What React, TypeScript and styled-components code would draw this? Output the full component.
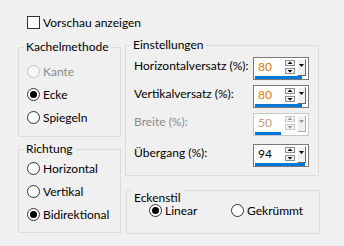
import React from 'react';
import styled, { createGlobalStyle } from 'styled-components';

const Global = createGlobalStyle`
  html, body { margin: 0; padding: 0; background: #f0f0f0; }
  body { font-family: Lato, "Noto Sans", sans-serif; font-size: 12px; color: #000; }
  #root { width: 344px; height: 246px; }
`;

const Page = styled.div`
  width: 344px;
  height: 246px;
  box-sizing: border-box;
  padding: 16px 0 0 18px;
  display: flex;
  flex-direction: column;
`;

const CheckRow = styled.label`
  display: flex;
  align-items: center;
  gap: 3px;
  margin-left: 9px;
  height: 13px;
  line-height: 13px;
`;

const CheckBox = styled.span`
  width: 13px;
  height: 13px;
  box-sizing: border-box;
  border: 1px solid #333;
  background: #fff;
`;

const Columns = styled.div`
  display: flex;
  gap: 4px;
  margin-top: 8px;
  align-items: flex-start;
`;

const LeftCol = styled.div`
  width: 103px;
  padding-top: 2px;
  display: flex;
  flex-direction: column;
  gap: 4px;
`;

const RightCol = styled.div`
  width: 195px;
  display: flex;
  flex-direction: column;
`;

const Group = styled.fieldset<{ $pt: number; $pb: number; $pr?: number; $ml?: number; $mt?: number; $w: number }>`
  margin: ${(p) => p.$mt ?? 0}px 0 0 ${(p) => p.$ml ?? 0}px;
  width: ${(p) => p.$w}px;
  box-sizing: border-box;
  min-width: 0;
  border: 1px solid #dcdcdc;
  padding: ${(p) => p.$pt}px ${(p) => p.$pr ?? 8}px ${(p) => p.$pb}px 8px;
`;

const Legend = styled.legend<{ $drop?: number }>`
  padding: ${(p) => p.$drop ?? 0}px 2px 0;
  margin-left: -3px;
  line-height: 16px;
  font-size: 12px;
`;

const RadioRow = styled.label<{ $disabled?: boolean }>`
  display: flex;
  align-items: center;
  gap: 3px;
  height: 23px;
  white-space: nowrap;
  color: ${(p) => (p.$disabled ? '#8a8a8a' : '#000')};
`;

const RadioCircle = styled.span<{ $checked?: boolean; $disabled?: boolean }>`
  flex: none;
  width: 13px;
  height: 13px;
  box-sizing: border-box;
  border-radius: 50%;
  border: 1px solid ${(p) => (p.$disabled ? '#c4c4c4' : '#333')};
  background: ${(p) => (p.$disabled ? '#f7f7f7' : '#fff')};
  display: flex;
  align-items: center;
  justify-content: center;
  &::after {
    content: '';
    width: 7px;
    height: 7px;
    border-radius: 50%;
    background: #000;
    display: ${(p) => (p.$checked ? 'block' : 'none')};
  }
`;

const SpinRow = styled.div<{ $mt: number }>`
  display: flex;
  justify-content: space-between;
  align-items: flex-start;
  margin-top: ${(p) => p.$mt}px;
`;

const SpinLabel = styled.span<{ $disabled?: boolean }>`
  line-height: 16px;
  margin-top: 1px;
  white-space: nowrap;
  color: ${(p) => (p.$disabled ? '#8a8a8a' : '#000')};
`;

const Spin = styled.div<{ $disabled?: boolean }>`
  flex: none;
  width: 56px;
  height: 23px;
  box-sizing: border-box;
  border: 1px solid ${(p) => (p.$disabled ? '#c8c8c8' : '#7a7a7a')};
  background: #fff;
  display: flex;
  flex-direction: column;
`;

const SpinTop = styled.div`
  height: 18px;
  display: flex;
`;

const SpinValue = styled.span<{ $color: string }>`
  flex: 1;
  padding-left: 4px;
  line-height: 18px;
  font-size: 12px;
  color: ${(p) => p.$color};
`;

const Arrows = styled.div`
  width: 10px;
  margin-right: 2px;
  padding-top: 2px;
  display: flex;
  flex-direction: column;
  gap: 2px;
`;

const Drop = styled.div<{ $disabled?: boolean }>`
  width: 9px;
  height: 17px;
  margin: 1px 2px 0 0;
  box-sizing: border-box;
  background: #f0f0f0;
  border-top: 1px solid #fff;
  border-left: 1px solid #fff;
  border-right: 1px solid ${(p) => (p.$disabled ? '#b0b0b0' : '#696969')};
  border-bottom: 1px solid ${(p) => (p.$disabled ? '#b0b0b0' : '#696969')};
  display: flex;
  justify-content: center;
  padding-top: 4px;
`;

const Bar = styled.div<{ $w: number }>`
  height: 3px;
  margin-left: 1px;
  width: ${(p) => p.$w}px;
  background: #0078d7;
`;

const StyleGrid = styled.div`
  display: grid;
  grid-template-columns: 82px auto;
  margin: -7px 0 0 14px;
`;

const ArrowBtn = ({ up, disabled }: { up?: boolean; disabled?: boolean }) => (
  <svg width="10" height="6" viewBox="0 0 10 6">
    <rect x="0.5" y="0.5" width="9" height="5" fill="#f4f4f4" stroke={disabled ? '#c8c8c8' : '#8c8c8c'} />
    {up ? (
      <path d="M2.5 4 L5 1.5 L7.5 4 Z" fill={disabled ? '#9a9a9a' : '#000'} />
    ) : (
      <path d="M2.5 2 L5 4.5 L7.5 2 Z" fill={disabled ? '#9a9a9a' : '#000'} />
    )}
  </svg>
);

const DropTri = ({ disabled }: { disabled?: boolean }) => (
  <svg width="5" height="3" viewBox="0 0 5 3">
    <path d="M0 0 H5 L2.5 3 Z" fill={disabled ? '#9a9a9a' : '#000'} />
  </svg>
);

type SpinProps = { label: string; value: string; bar: number; color: string; mt: number; disabled?: boolean };

const SpinField = ({ label, value, bar, color, mt, disabled }: SpinProps) => (
  <SpinRow $mt={mt}>
    <SpinLabel $disabled={disabled}>{label}</SpinLabel>
    <Spin $disabled={disabled}>
      <SpinTop>
        <SpinValue $color={color}>{value}</SpinValue>
        <Arrows>
          <ArrowBtn up disabled={disabled} />
          <ArrowBtn disabled={disabled} />
        </Arrows>
        <Drop $disabled={disabled}>
          <DropTri disabled={disabled} />
        </Drop>
      </SpinTop>
      <Bar $w={bar} />
    </Spin>
  </SpinRow>
);

const Radio = ({ label, checked, disabled }: { label: string; checked?: boolean; disabled?: boolean }) => (
  <RadioRow $disabled={disabled}>
    <RadioCircle $checked={checked} $disabled={disabled} />
    {label}
  </RadioRow>
);

export default function App() {
  return (
    <>
      <Global />
      <Page>
        <CheckRow>
          <CheckBox />
          Vorschau anzeigen
        </CheckRow>
        <Columns>
          <LeftCol>
            <Group $w={103} $pt={5} $pb={7}>
              <Legend>Kachelmethode</Legend>
              <Radio label="Kante" disabled />
              <Radio label="Ecke" checked />
              <Radio label="Spiegeln" />
            </Group>
            <Group $w={103} $pt={0} $pb={6}>
              <Legend>Richtung</Legend>
              <Radio label="Horizontal" />
              <Radio label="Vertikal" />
              <Radio label="Bidirektional" checked />
            </Group>
          </LeftCol>
          <RightCol>
            <Group $w={194} $pt={0} $pb={8} $pr={9}>
              <Legend>Einstellungen</Legend>
              <SpinField label="Horizontalversatz (%):" value="80" bar={47} color="#e07a00" mt={4} />
              <SpinField label="Vertikalversatz (%):" value="80" bar={47} color="#e07a00" mt={5} />
              <SpinField label="Breite (%):" value="50" bar={26} color="#d09a7a" mt={5} disabled />
              <SpinField label="Übergang (%):" value="94" bar={50} color="#000" mt={8} />
            </Group>
            <Group $w={194} $ml={1} $mt={-2} $pt={0} $pb={11}>
              <Legend $drop={16}>Eckenstil</Legend>
              <StyleGrid>
                <Radio label="Linear" checked />
                <Radio label="Gekrümmt" />
              </StyleGrid>
            </Group>
          </RightCol>
        </Columns>
      </Page>
    </>
  );
}
